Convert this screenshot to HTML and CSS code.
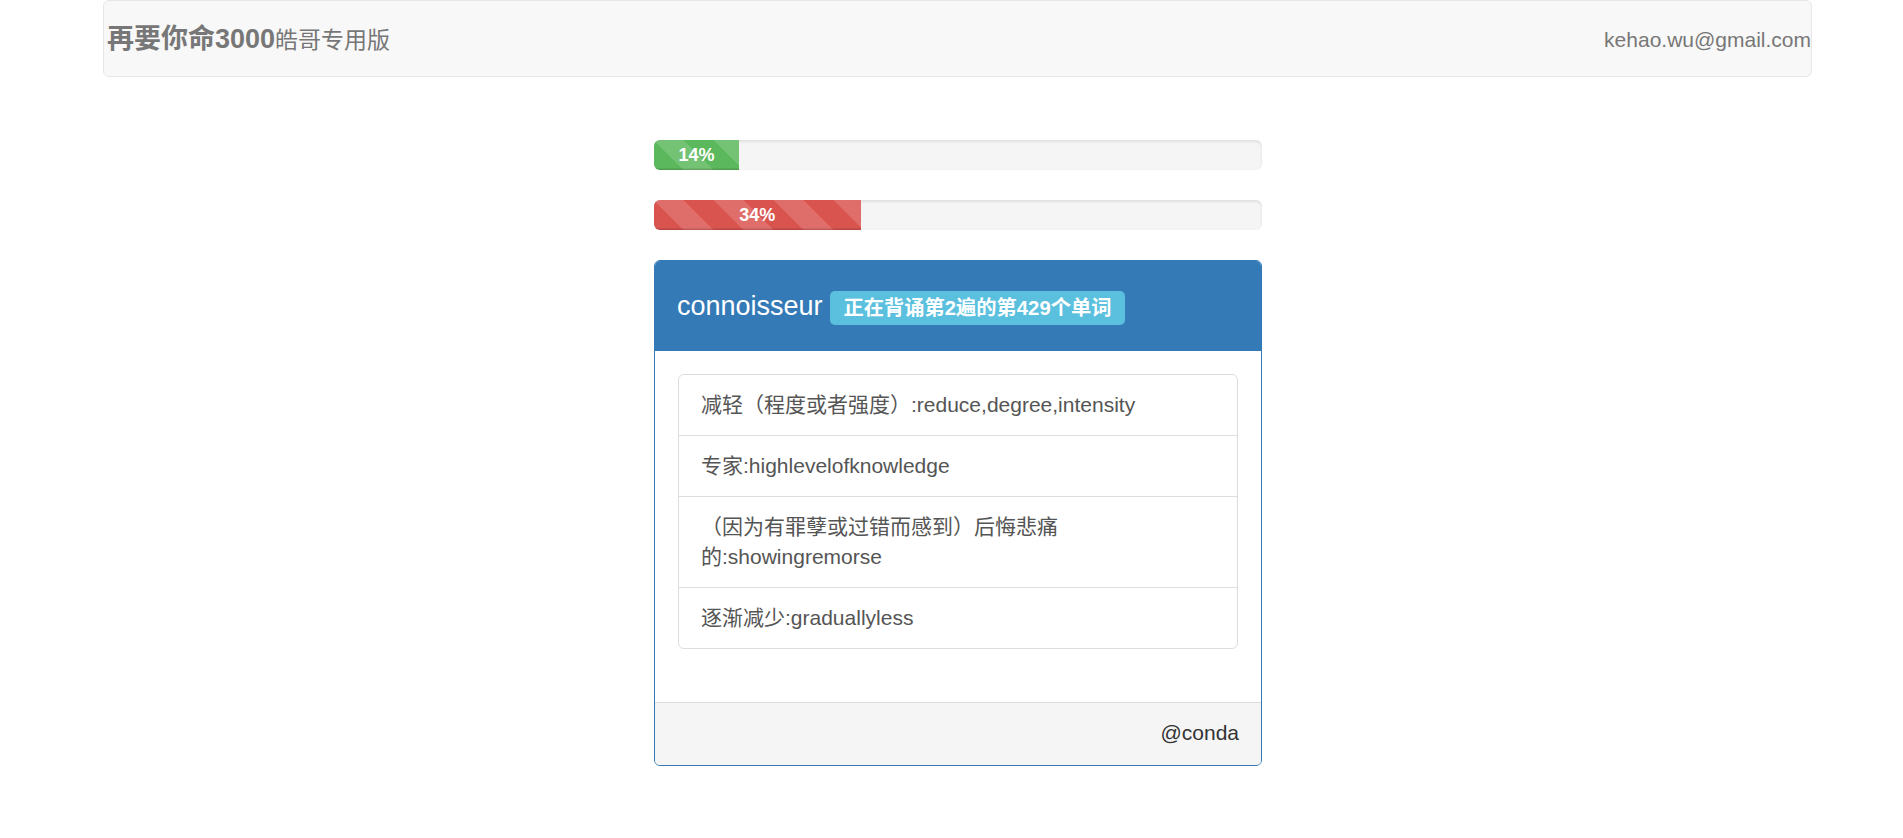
FILE: index.html
```html
<!DOCTYPE html>
<html lang="zh-CN">
<head>
<meta charset="utf-8">
<title>再要你命3000</title>
<link rel="stylesheet" href="styles.css">
</head>
<body>
<div class="container">
  <nav class="navbar">
    <div class="brand"><b>再要你命3000</b><small>皓哥专用版</small></div>
    <div class="navbar-text">kehao.wu@gmail.com</div>
  </nav>
  <main class="main">
    <div class="progress"><div class="bar bar-success" style="width:14%">14%</div></div>
    <div class="progress"><div class="bar bar-danger" style="width:34%">34%</div></div>
    <section class="panel">
      <div class="panel-heading">
        <h3 class="panel-title">connoisseur</h3>
        <span class="label">正在背诵第2遍的第429个单词</span>
      </div>
      <div class="panel-body">
        <ul class="list-group">
          <li class="list-item">减轻（程度或者强度）:reduce,degree,intensity</li>
          <li class="list-item">专家:highlevelofknowledge</li>
          <li class="list-item">（因为有罪孽或过错而感到）后悔悲痛的:showingremorse</li>
          <li class="list-item">逐渐减少:graduallyless</li>
        </ul>
      </div>
      <div class="panel-footer">@conda</div>
    </section>
  </main>
</div>
</body>
</html>
```
FILE: styles.css
```css
* { box-sizing: border-box; }
html, body { margin: 0; padding: 0; background: #fff; }
body {
  font-family: "Liberation Sans", "Noto Sans CJK SC", sans-serif;
  font-size: 21px;
  line-height: 30px;
  color: #333;
}
.container { width: 1709px; margin-left: 103px; }

.navbar {
  height: 77px;
  display: flex;
  align-items: center;
  justify-content: space-between;
  padding: 2px 0 0 3px;
  background: #f8f8f8;
  border: 1px solid #e7e7e7;
  border-radius: 6px;
  color: #777;
}
.brand { font-size: 27px; line-height: 30px; color: #777; }
.brand b { font-weight: 700; }
.brand small { font-size: 23px; font-weight: 400; }
.navbar-text { font-size: 21px; color: #777; }

.main { margin-left: 551px; width: 608px; padding-top: 63px; }

.progress {
  height: 30px;
  margin-bottom: 30px;
  overflow: hidden;
  background: #f5f5f5;
  border-radius: 6px;
  box-shadow: inset 0 1.5px 3px rgba(0,0,0,.1);
}
.bar {
  height: 100%;
  font-size: 18px;
  font-weight: 700;
  line-height: 30px;
  color: #fff;
  text-align: center;
  box-shadow: inset 0 -1.5px 0 rgba(0,0,0,.15);
  background-image: linear-gradient(45deg, rgba(255,255,255,.15) 25%, transparent 25%, transparent 50%, rgba(255,255,255,.15) 50%, rgba(255,255,255,.15) 75%, transparent 75%, transparent);
  background-size: 60px 60px;
}
.bar-success { background-color: #5cb85c; }
.bar-danger { background-color: #d9534f; }

.panel {
  border: 1px solid #337ab7;
  border-radius: 6px;
  overflow: hidden;
  background: #fff;
}
.panel-heading {
  height: 90px;
  display: flex;
  align-items: center;
  padding: 0 22px;
  background: #337ab7;
  color: #fff;
}
.panel-title {
  margin: 0;
  font-size: 27px;
  font-weight: 400;
  line-height: 30px;
}
.label {
  margin-left: 7px;
  margin-top: 4px;
  padding: 7px 14px 7px;
  font-size: 20.25px;
  font-weight: 700;
  line-height: 20px;
  background: #5bc0de;
  color: #fff;
  border-radius: 5px;
}
.panel-body { padding: 23px 23px 23px; }
.list-group { list-style: none; margin: 0 0 30px; padding: 0; }
.list-item {
  padding: 15px 22px;
  border: 1px solid #ddd;
  margin-bottom: -1px;
  color: #555;
}
.list-item:first-child { border-radius: 6px 6px 0 0; }
.list-item:last-child { border-radius: 0 0 6px 6px; margin-bottom: 0; }
.panel-footer {
  padding: 15px 22px 17px;
  background: #f5f5f5;
  border-top: 1px solid #ddd;
  text-align: right;
  color: #333;
}
```
